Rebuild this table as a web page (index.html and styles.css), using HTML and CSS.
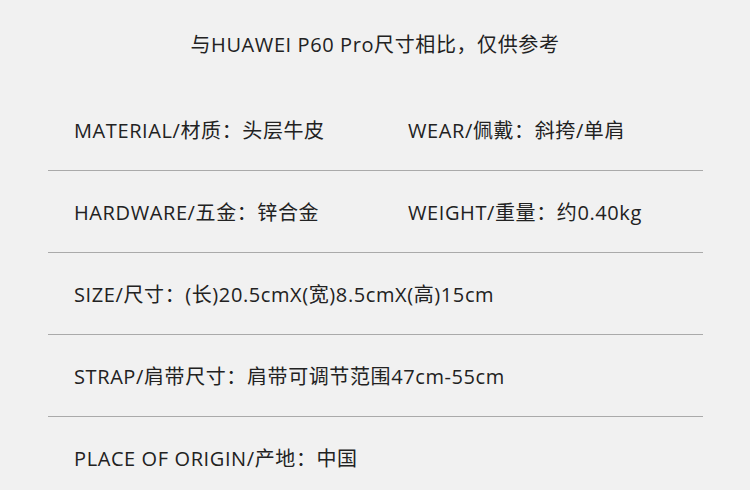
FILE: index.html
```html
<!DOCTYPE html>
<html lang="zh-CN">
<head>
    <meta charset="UTF-8">
    <meta name="viewport" content="width=device-width, initial-scale=1.0">
    <title>产品参数</title>
    <link rel="stylesheet" href="styles.css">
</head>
<body>
    <h1 class="title">与HUAWEI P60 Pro尺寸相比，仅供参考</h1>
    <div class="spec-list">
        <div class="spec-row">
            <span class="spec">MATERIAL/材质：头层牛皮</span>
            <span class="spec">WEAR/佩戴：斜挎/单肩</span>
        </div>
        <div class="spec-row">
            <span class="spec">HARDWARE/五金：锌合金</span>
            <span class="spec">WEIGHT/重量：约0.40kg</span>
        </div>
        <div class="spec-row">
            <span class="spec">SIZE/尺寸：(长)20.5cmX(宽)8.5cmX(高)15cm</span>
        </div>
        <div class="spec-row">
            <span class="spec">STRAP/肩带尺寸：肩带可调节范围47cm-55cm</span>
        </div>
        <div class="spec-row last">
            <span class="spec">PLACE OF ORIGIN/产地：中国</span>
        </div>
    </div>
</body>
</html>
```

FILE: styles.css
```css
body {
    margin: 0;
    background-color: #f1f1f1;
    color: #222;
    font-family: "Open Sans", "Noto Sans CJK SC", sans-serif;
    letter-spacing: 0.6px;
}
.title {
    margin: 0;
    height: 89px;
    line-height: 89px;
    text-align: center;
    font-size: 20px;
    font-weight: normal;
}
.spec-list {
    margin-left: 48px;
    width: 655px;
}
.spec-row {
    display: grid;
    grid-template-columns: 334px 1fr;
    align-items: center;
    height: 81px;
    padding-left: 26px;
    border-bottom: 1px solid #aaa;
    font-size: 20px;
}
.spec-row.last {
    border-bottom: none;
}
.spec {
    white-space: nowrap;
}
```
